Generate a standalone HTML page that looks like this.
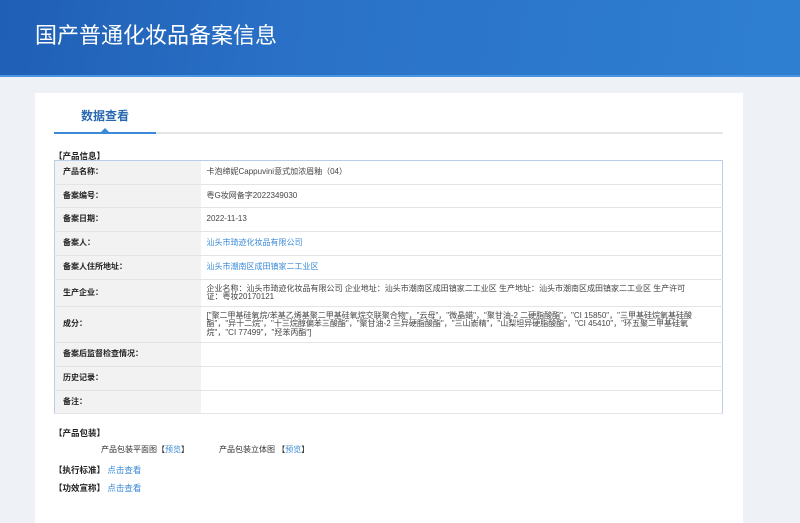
<!DOCTYPE html>
<html><head><meta charset="utf-8"><style>
*{margin:0;padding:0;box-sizing:border-box}
body{width:800px;height:510px;overflow:hidden;background:#eef1f5;font-family:"Liberation Sans","Noto Sans CJK SC",sans-serif;font-size:9px;color:#333}
.hd{position:absolute;left:0;top:0;width:800px;height:77px;background:linear-gradient(100deg,#1f5fb5 0%,#2a72c8 40%,#2e7fd2 100%);border-bottom:2px solid #4a95e0}
.hd h1{position:absolute;left:35px;top:18px;font-size:22px;font-weight:normal;color:#fff}
.pn{position:absolute;left:35px;top:93px;width:708px;height:430px;background:#fff}
.tab{position:absolute;left:46px;top:14px;font-size:12px;font-weight:bold;color:#2868b0}
.ln{position:absolute;left:19px;top:39px;width:669px;height:2px;background:#e6e6e6}
.ln2{position:absolute;left:19px;top:39px;width:102px;height:2px;background:#3a8ad8}
.tri{position:absolute;left:66px;top:35px;width:0;height:0;border-left:4px solid transparent;border-right:4px solid transparent;border-bottom:4px solid #3a8ad8}
.sec{position:absolute;font-weight:bold;color:#222;font-size:8.5px}
table{position:absolute;left:19px;top:67px;width:669px;border-collapse:collapse;border:1px solid #b8cde8}
td{border-bottom:1px solid #e4e4e4;font-size:8px;vertical-align:middle;line-height:8.5px}
td.l{width:146px;background:#f2f2f2;font-weight:bold;padding-left:8px;color:#222}
td.v{padding-left:6px;padding-right:30px;color:#444}
a{color:#3a8ad8;text-decoration:none}
.t{position:absolute;font-size:8px;color:#333}
</style></head><body>
<div class="hd"><h1>国产普通化妆品备案信息</h1></div>
<div class="pn">
<div class="tab">数据查看</div>
<div class="ln"></div><div class="ln2"></div><div class="tri"></div>
<div class="sec" style="left:19px;top:57px">【产品信息】</div>
<table>
<tr style="height:24px"><td class="l">产品名称：</td><td class="v">卡泡缔妮Cappuvini意式加浓眉釉（04）</td></tr>
<tr style="height:23px"><td class="l">备案编号：</td><td class="v">粤G妆网备字2022349030</td></tr>
<tr style="height:24px"><td class="l">备案日期：</td><td class="v">2022-11-13</td></tr>
<tr style="height:24px"><td class="l">备案人：</td><td class="v"><a>汕头市琦迹化妆品有限公司</a></td></tr>
<tr style="height:24px"><td class="l">备案人住所地址：</td><td class="v"><a>汕头市潮南区成田镇家二工业区</a></td></tr>
<tr style="height:27px"><td class="l">生产企业：</td><td class="v">企业名称：汕头市琦迹化妆品有限公司 企业地址：汕头市潮南区成田镇家二工业区 生产地址：汕头市潮南区成田镇家二工业区 生产许可证：粤妆20170121</td></tr>
<tr style="height:36px"><td class="l">成分：</td><td class="v">["聚二甲基硅氧烷/苯基乙烯基聚二甲基硅氧烷交联聚合物"，"云母"，"微晶蜡"，"聚甘油-2 二硬脂酸酯"，"CI 15850"，"三甲基硅烷氧基硅酸酯"，"异十二烷"，"十三烷醇偏苯三酸酯"，"聚甘油-2 三异硬脂酸酯"，"三山嵛精"，"山梨坦异硬脂酸酯"，"CI 45410"，"环五聚二甲基硅氧烷"，"CI 77499"，"羟苯丙酯"]</td></tr>
<tr style="height:24px"><td class="l">备案后监督检查情况：</td><td class="v"></td></tr>
<tr style="height:24px"><td class="l">历史记录：</td><td class="v"></td></tr>
<tr style="height:23px"><td class="l">备注：</td><td class="v"></td></tr>
</table>
<div class="sec" style="left:19px;top:334px">【产品包装】</div>
<div class="t" style="left:66px;top:351px">产品包装平面图【<a>预览</a>】</div>
<div class="t" style="left:184px;top:351px">产品包装立体图 【<a>预览</a>】</div>
<div class="sec" style="left:19px;top:371px">【执行标准】 <a style="font-weight:normal">点击查看</a></div>
<div class="sec" style="left:19px;top:389px">【功效宣称】 <a style="font-weight:normal">点击查看</a></div>
</div>
</body></html>
